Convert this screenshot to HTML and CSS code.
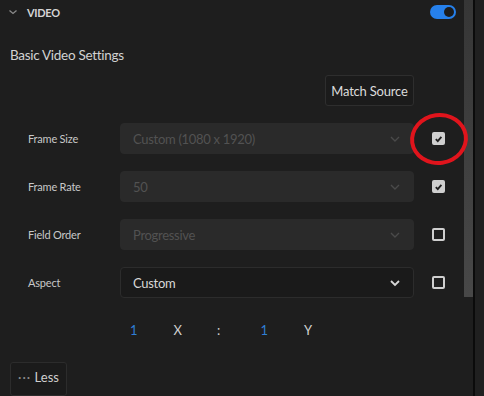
FILE: index.html
```html
<!DOCTYPE html>
<html lang="en">
<head>
  <meta charset="UTF-8" />
  <title>Video Settings</title>
  <link rel="stylesheet" href="styles.css">
</head>
<body>
  <div class="panel">
    <div class="content">

      <!-- Section header -->
      <div class="section-head">
        <svg class="caret" width="10" height="8" viewBox="0 0 10 8"><path d="M1.5 2.5 L5 5.5 L8.5 2.5" fill="none" stroke="#8a8a8a" stroke-width="1.3"/></svg>
        <span class="section-title">VIDEO</span>
        <span class="toggle"><span class="knob"></span></span>
      </div>

      <h2 class="title">Basic Video Settings</h2>

      <div class="match-row">
        <button class="btn match">Match Source</button>
      </div>

      <div class="row">
        <span class="label">Frame Size</span>
        <div class="select disabled"><span>Custom (1080 x 1920)</span><svg width="12" height="8" viewBox="0 0 12 8"><path d="M2 2 L6 6 L10 2" fill="none" stroke="#4a4a4a" stroke-width="1.4"/></svg></div>
        <span class="check on"><svg width="10" height="10" viewBox="0 0 10 10"><path d="M2 5.2 L4.2 7.4 L8.2 2.6" fill="none" stroke="#1e1e1e" stroke-width="2"/></svg></span>
        <span class="ring"></span>
      </div>

      <div class="row">
        <span class="label">Frame Rate</span>
        <div class="select disabled"><span>50</span><svg width="12" height="8" viewBox="0 0 12 8"><path d="M2 2 L6 6 L10 2" fill="none" stroke="#4a4a4a" stroke-width="1.4"/></svg></div>
        <span class="check on"><svg width="10" height="10" viewBox="0 0 10 10"><path d="M2 5.2 L4.2 7.4 L8.2 2.6" fill="none" stroke="#1e1e1e" stroke-width="2"/></svg></span>
      </div>

      <div class="row">
        <span class="label">Field Order</span>
        <div class="select disabled"><span>Progressive</span><svg width="12" height="8" viewBox="0 0 12 8"><path d="M2 2 L6 6 L10 2" fill="none" stroke="#4a4a4a" stroke-width="1.4"/></svg></div>
        <span class="check"></span>
      </div>

      <div class="row">
        <span class="label">Aspect</span>
        <div class="select"><span>Custom</span><svg width="12" height="8" viewBox="0 0 12 8"><path d="M2 2 L6 6 L10 2" fill="none" stroke="#d8d8d8" stroke-width="1.8"/></svg></div>
        <span class="check"></span>
      </div>

      <div class="ratio">
        <span class="num">1</span>
        <span>X</span>
        <span>:</span>
        <span class="num">1</span>
        <span>Y</span>
      </div>

      <button class="btn less"><span class="dots">&middot;&middot;&middot;</span> Less</button>
    </div>

    <div class="scroll"><div class="thumb"></div></div>
    <div class="divider"></div>
    <div class="rest"></div>
  </div>
</body>
</html>
```

FILE: styles.css
```css
body {
  margin: 0;
  background: #1e1e1e;
  font-family: Lato, "Open Sans", sans-serif;
  color: #c8c8c8;
  overflow: hidden;
}

.panel {
  display: flex;
  height: 396px;
}

.content {
  width: 464px;
}

.scroll {
  width: 9px;
  background: #1e1e1e;
}

.thumb {
  height: 297px;
  background: linear-gradient(#363636, #484848);
}

.divider {
  width: 2px;
  background: #0b0b0b;
}

.rest {
  flex: 1;
  background: #202020;
}

/* header */
.section-head {
  display: flex;
  align-items: center;
  height: 24px;
  padding: 0 8px 0 8px;
}

.caret {
  margin-right: 9px;
}

.section-title {
  font-size: 11px;
  font-weight: bold;
  color: #d4d4d4;
  letter-spacing: -0.3px;
}

.toggle {
  margin-left: auto;
  width: 26px;
  height: 14px;
  border-radius: 7px;
  background: #2680eb;
  position: relative;
}

.knob {
  position: absolute;
  right: 2px;
  top: 2px;
  width: 10px;
  height: 10px;
  border-radius: 50%;
  background: #1c1c1c;
}

.title {
  margin: 22px 0 0 10px;
  font-size: 13.5px;
  font-weight: normal;
  color: #d2d2d2;
  height: 18px;
  line-height: 18px;
  letter-spacing: -0.3px;
}

.match-row {
  display: flex;
  justify-content: flex-end;
  padding-right: 50px;
  margin-top: 11px;
}

.btn {
  font-family: Lato, "Open Sans", sans-serif;
  background: #1b1b1b;
  border: 1px solid #2e2e2e;
  border-radius: 3px;
  color: #dcdcdc;
  cursor: pointer;
}

.match {
  width: 89px;
  height: 31px;
  font-size: 13px;
  padding: 0;
  letter-spacing: -0.2px;
}

/* setting rows */
.row {
  display: flex;
  align-items: center;
  height: 31px;
  margin-top: 17px;
  position: relative;
}

.label {
  width: 92px;
  padding-left: 28px;
  font-size: 11px;
  color: #c8c8c8;
  letter-spacing: -0.2px;
}

.select {
  width: 294px;
  height: 31px;
  box-sizing: border-box;
  display: flex;
  align-items: center;
  justify-content: space-between;
  padding: 0 12px 0 12px;
  background: #1a1a1a;
  border: 1px solid #2c2c2c;
  border-radius: 4px;
  font-size: 13px;
  letter-spacing: -0.3px;
  color: #d8d8d8;
}

.select.disabled {
  background: #2a2a2a;
  border-color: #2a2a2a;
  color: #525252;
}

.check {
  margin-left: 18px;
  width: 13px;
  height: 13px;
  box-sizing: border-box;
  border: 2px solid #cfcfcf;
  border-radius: 2px;
  display: flex;
  align-items: center;
  justify-content: center;
}

.check.on {
  background: #cfcfcf;
}

.ring {
  position: absolute;
  left: 410px;
  top: -10px;
  width: 50px;
  height: 44px;
  border: 4px solid #e0141c;
  border-radius: 50%;
  transform: rotate(-8deg);
}

.ratio {
  display: flex;
  align-items: center;
  height: 20px;
  margin-top: 22px;
  padding-left: 130px;
  font-size: 13px;
  color: #d0d0d0;
}

.ratio span {
  width: 43.5px;
}

.ratio .num {
  color: #2f7fd6;
}

.less {
  margin: 22px 0 0 10px;
  width: 57px;
  height: 34px;
  font-size: 13px;
  padding: 0 0 4px 0;
  color: #cfcfcf;
  border-color: #2c2c2c;
}

.dots {
  color: #8a8a8a;
  letter-spacing: 1px;
}
```
